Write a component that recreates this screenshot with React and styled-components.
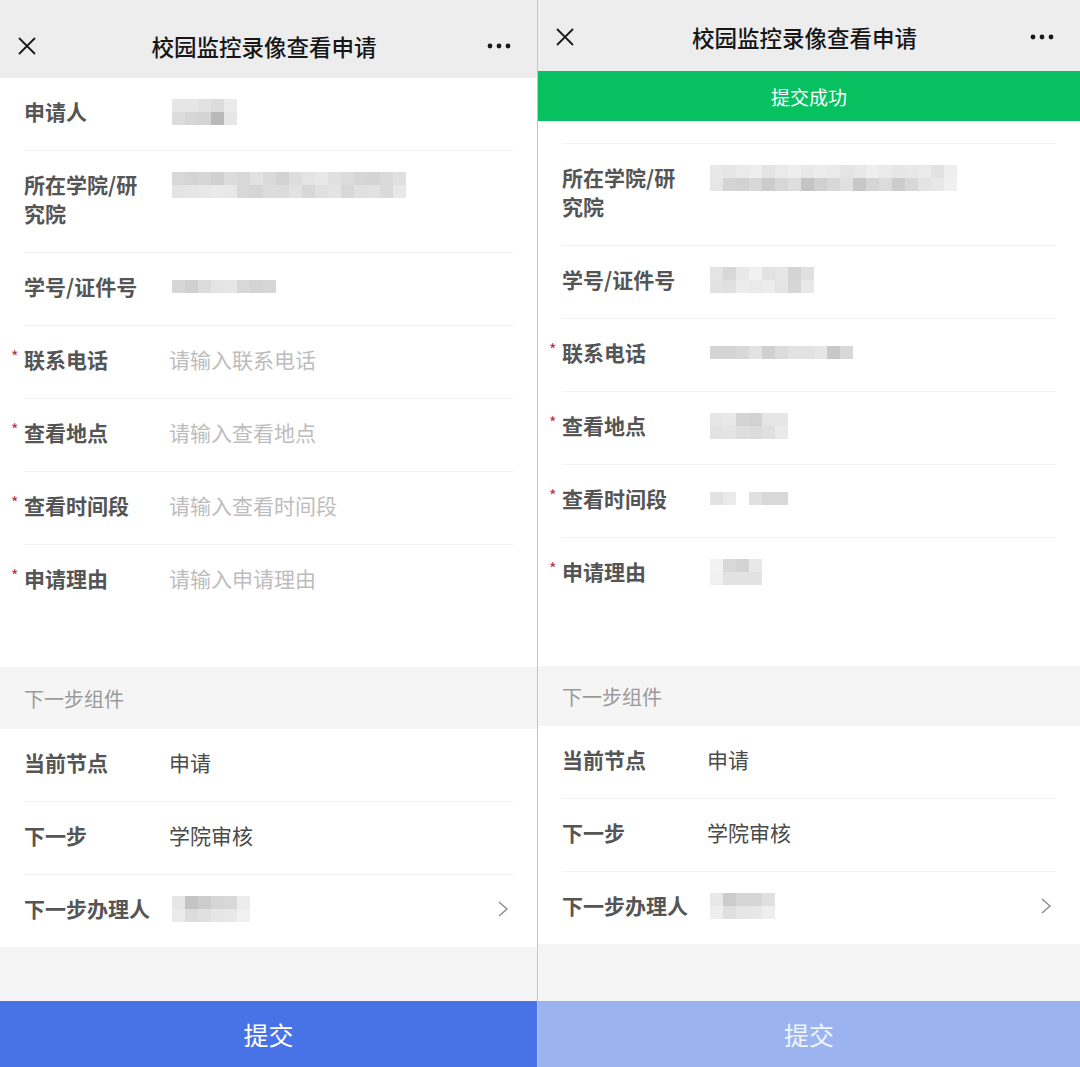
import styled, { createGlobalStyle } from 'styled-components';

const GlobalStyle = createGlobalStyle`
  html, body {
    margin: 0;
    padding: 0;
    background: #f5f5f5;
    overflow: hidden;
  }
  body {
    font-family: 'Noto Sans CJK SC', 'Noto Sans', sans-serif;
  }
`;

// blurred personal data, drawn as grey mosaic cells ("--" = empty)
const blur = {
  applicant: 'e6 e6 e2 dc ea|dc d6 d4 b9 e6',
  collegeL: 'd8 d4 d6 d0 dc d8 e2 da d2 de e4 e8 e0 dc d6 d4 da e0|e4 e6 e8 ea e8 d8 d6 dc dc e2 d8 e0 e4 d8 e0 e2 da e8',
  idL: 'd6 d0 dc e4 e6 d8 d4 d6',
  handlerL: 'e6 c4 cc d6 d8 ec|ea dc e0 e6 e8 f0',
  collegeR: 'e8 e6 ea ee e4 ea ee e8 ec ea e4 e8 ee ea e6 e8 ea e2 ee|e6 d4 d2 d8 cc d8 de c4 d0 d8 e0 c8 d6 dc cc d8 e4 e8 f0',
  idR: 'e4 d8 e8 f0 e2 e6 d4 e0|e2 e0 ec ea ec e4 d6 e8',
  phoneR: 'd4 d4 d8 e2 d0 dc e2 e2 e6 c8 d8',
  placeR: 'e6 e8 d4 d2 e6 e6|e2 e4 de dc e0 ea',
  timeR: 'e2 ea -- e0 d8 d8',
  reasonR: 'f2 d8 d4 e8|f0 e2 e2 e2',
  handlerR: 'e8 cc d6 d6 e0|ee e0 e6 e8 ee',
};

function Mosaic({ code }) {
  const rows = code.split('|').map((r) => r.split(' '));
  return (
    <MosaicBox>
      {rows.map((row, i) => (
        <MosaicRow key={i}>
          {row.map((c, j) => (
            <Cell key={j} $shade={c} />
          ))}
        </MosaicRow>
      ))}
    </MosaicBox>
  );
}

function CloseIcon() {
  return (
    <svg width="20" height="20" viewBox="0 0 20 20">
      <path d="M2 2 L18 18 M18 2 L2 18" stroke="#1a1a1a" strokeWidth="1.8" fill="none" />
    </svg>
  );
}

function MoreIcon() {
  return (
    <svg width="24" height="6" viewBox="0 0 24 6">
      <circle cx="3" cy="3" r="2.4" fill="#1a1a1a" />
      <circle cx="12" cy="3" r="2.4" fill="#1a1a1a" />
      <circle cx="21" cy="3" r="2.4" fill="#1a1a1a" />
    </svg>
  );
}

function Chevron() {
  return (
    <svg width="12" height="18" viewBox="0 0 12 18">
      <polyline points="2,2 10,9 2,16" stroke="#8a8a8a" strokeWidth="1.4" fill="none" />
    </svg>
  );
}

function Field({ label, required, placeholder, code, tall, children }) {
  return (
    <Row $tall={tall}>
      <Label $required={required}>{label}</Label>
      <Value $placeholder={!!placeholder}>
        {placeholder}
        {code && <Mosaic code={code} />}
        {children}
      </Value>
    </Row>
  );
}

function Screen({ submitted }) {
  const d = submitted;
  return (
    <Panel $width={d ? 'auto' : '537px'}>
      <Header $top={d ? 6 : 15} $height={d ? 71 : 78}>
        <CloseIcon />
        <Title>校园监控录像查看申请</Title>
        <MoreIcon />
      </Header>
      <Body>
        <Card>
          <Field label="申请人" code={blur.applicant} />
          <Field label="所在学院/研究院" code={d ? blur.collegeR : blur.collegeL} />
          <Field label="学号/证件号" code={d ? blur.idR : blur.idL} />
          <Field label="联系电话" required placeholder={d ? null : '请输入联系电话'} code={d && blur.phoneR} />
          <Field label="查看地点" required placeholder={d ? null : '请输入查看地点'} code={d && blur.placeR} />
          <Field label="查看时间段" required placeholder={d ? null : '请输入查看时间段'} code={d && blur.timeR} />
          <Field label="申请理由" required tall={d ? 128 : 122} placeholder={d ? null : '请输入申请理由'} code={d && blur.reasonR} />
        </Card>
        <Section $height={d ? 60 : 62}>下一步组件</Section>
        <Card>
          <Field label="当前节点">申请</Field>
          <Field label="下一步">学院审核</Field>
          <Field label="下一步办理人" code={d ? blur.handlerR : blur.handlerL}>
            <Arrow>
              <Chevron />
            </Arrow>
          </Field>
        </Card>
      </Body>
      <Submit $done={d}>提交</Submit>
      {d && <Toast $top={71}>提交成功</Toast>}
    </Panel>
  );
}

export default function App() {
  return (
    <>
      <GlobalStyle />
      <Wrapper>
        <Screen />
        <Divider />
        <Screen submitted />
      </Wrapper>
    </>
  );
}

const Wrapper = styled.div`
  display: flex;
  width: 1080px;
  height: 1067px;
`;

const Divider = styled.div`
  width: 1px;
  background: #c4c4c4;
`;

const Panel = styled.section`
  position: relative;
  width: ${(p) => p.$width};
  flex: ${(p) => (p.$width === 'auto' ? '1' : 'none')};
  display: flex;
  flex-direction: column;
  background: #f5f5f5;
  overflow: hidden;
`;

const Header = styled.header`
  flex: none;
  box-sizing: border-box;
  height: ${(p) => p.$height}px;
  padding: ${(p) => p.$top}px 26px 0 17px;
  display: grid;
  grid-template-columns: 40px 1fr 40px;
  align-items: center;
  align-content: start;
  grid-auto-rows: 62px;
  background: #ededed;

  svg:last-child {
    justify-self: end;
  }
`;

const Title = styled.h1`
  margin: 0;
  text-align: center;
  font-size: 22.5px;
  font-weight: 500;
  color: #161616;
`;

const Body = styled.main`
  flex: 1;
  overflow: hidden;
`;

const Card = styled.div`
  background: #fff;
`;

const Row = styled.div`
  display: flex;
  align-items: flex-start;
  margin: 0 24px;
  padding: 19px 0 24px;
  min-height: ${(p) => (p.$tall ? p.$tall - 43 : 0)}px;
  border-bottom: 1px solid #f3f3f3;
  line-height: 29px;

  &:last-child {
    border-bottom: none;
  }
`;

const Label = styled.div`
  position: relative;
  flex: none;
  width: 130px;
  margin-right: 15px;
  font-size: 21px;
  font-weight: 600;
  color: #555;

  &::before {
    content: ${(p) => (p.$required ? "'*'" : 'none')};
    position: absolute;
    left: -13px;
    top: -3px;
    font-size: 16px;
    font-weight: 400;
    color: #b8324a;
  }
`;

const Value = styled.div`
  flex: 1;
  display: flex;
  align-items: center;
  min-height: 29px;
  font-size: 21px;
  color: ${(p) => (p.$placeholder ? '#bdbdbd' : '#4a4a4a')};
`;

const Arrow = styled.span`
  margin-left: auto;
  margin-right: 4px;
  display: flex;
  align-items: center;
`;

const MosaicBox = styled.span`
  display: inline-flex;
  flex-direction: column;
  margin-left: 3px;
  filter: blur(0.7px);
`;

const MosaicRow = styled.span`
  display: flex;
`;

const Cell = styled.span`
  width: 13px;
  height: 13px;
  background: ${(p) => (p.$shade === '--' ? 'transparent' : `#${p.$shade}${p.$shade}${p.$shade}`)};
`;

const Section = styled.div`
  height: ${(p) => p.$height}px;
  display: flex;
  align-items: center;
  padding-left: 24px;
  font-size: 20px;
  color: #9a9a9a;
`;

const Submit = styled.button`
  flex: none;
  height: 66px;
  border: none;
  font-family: inherit;
  font-size: 25px;
  color: ${(p) => (p.$done ? '#f0f4fd' : '#fff')};
  background: ${(p) => (p.$done ? '#9bb4f0' : '#4873e7')};
`;

const Toast = styled.div`
  position: absolute;
  top: ${(p) => p.$top}px;
  left: 0;
  right: 0;
  height: 50px;
  display: flex;
  align-items: center;
  justify-content: center;
  background: #07c160;
  color: #fff;
  font-size: 19px;
`;
